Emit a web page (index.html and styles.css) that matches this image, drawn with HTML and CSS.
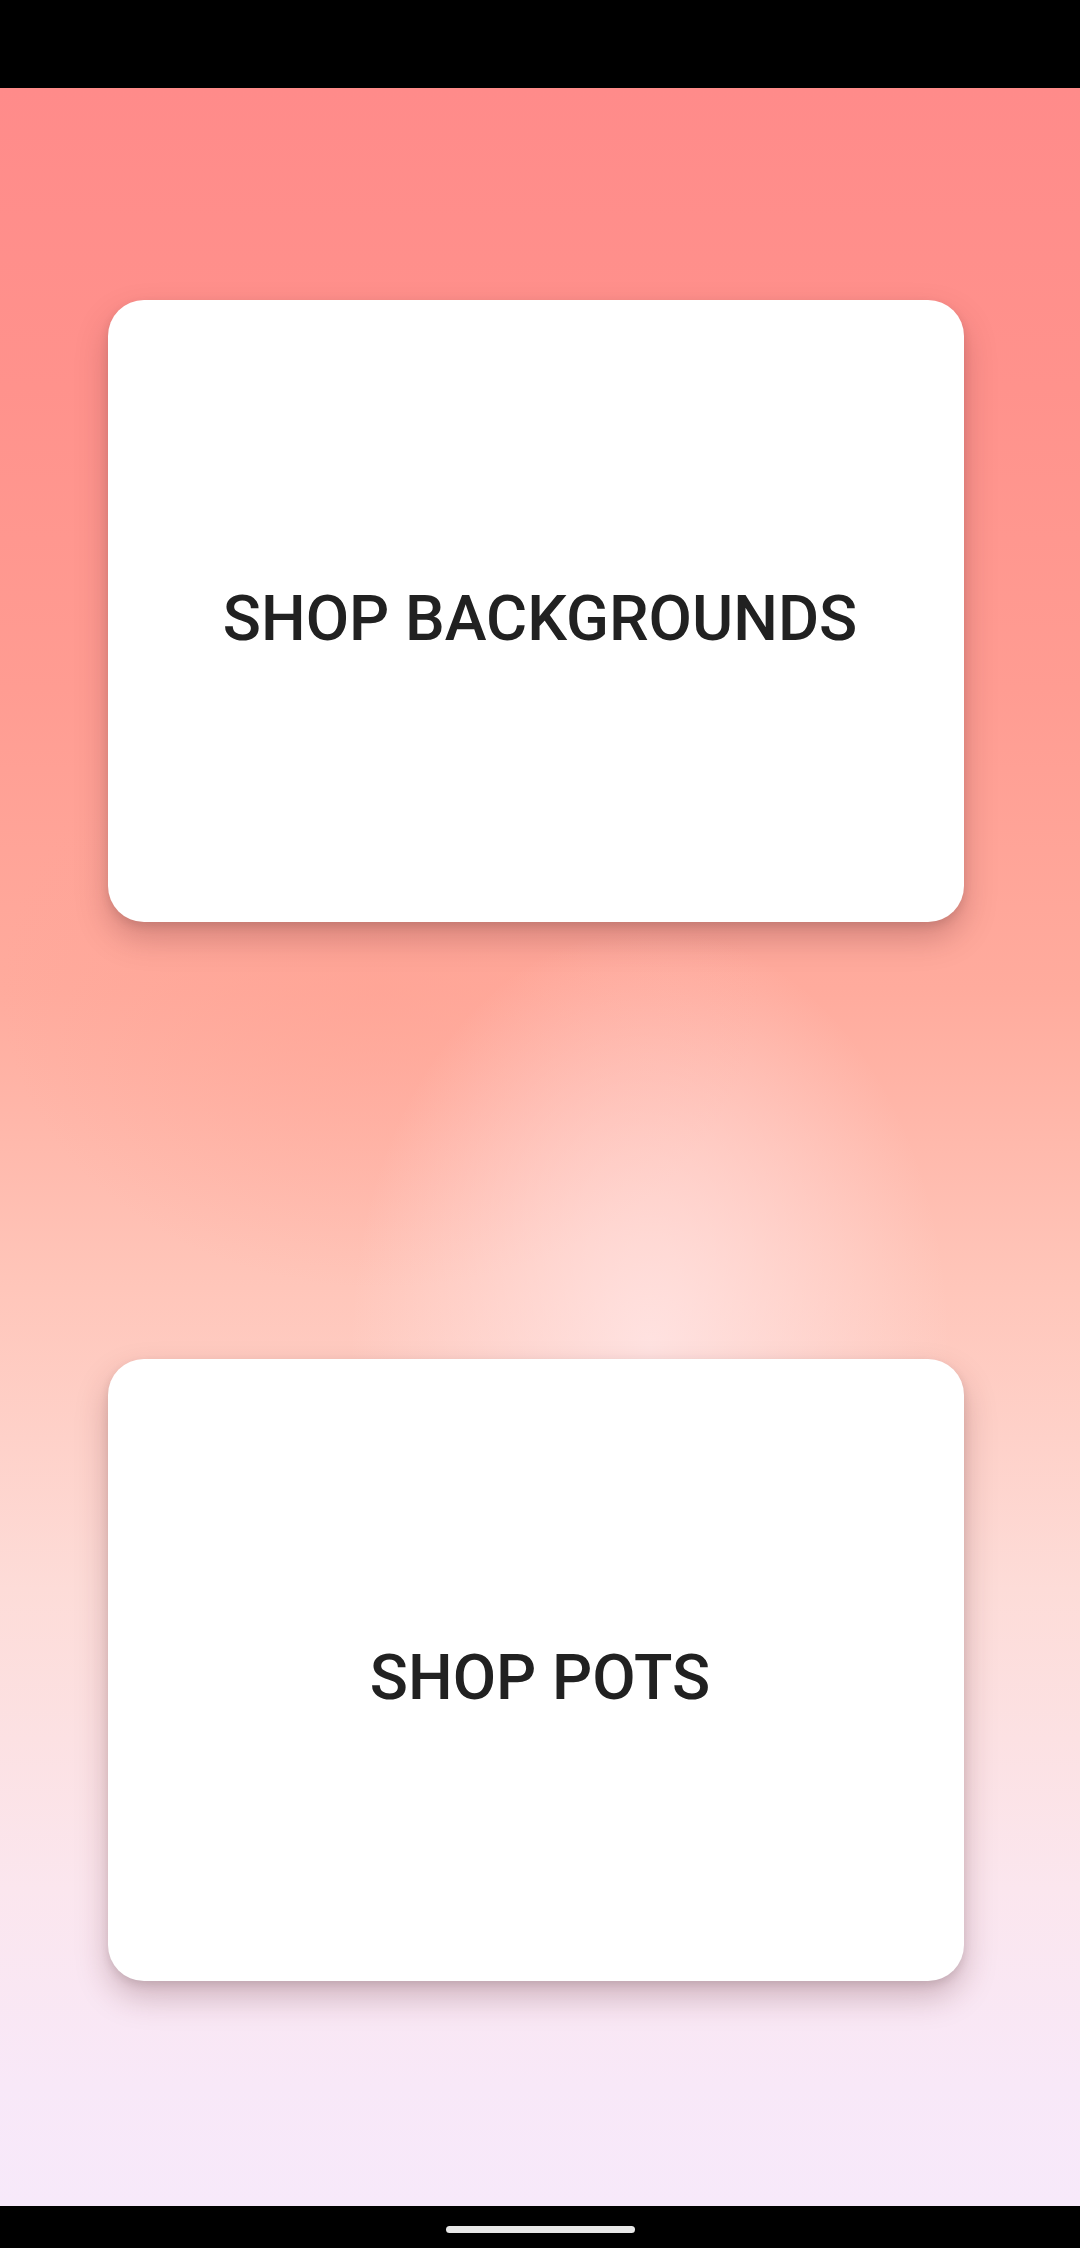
FILE: index.html
```html
<!DOCTYPE html>
<html>
<head>
<meta charset="utf-8">
<link rel="stylesheet" href="styles.css">
</head>
<body>
<div class="screen">
  <div class="status-bar"></div>
  <main class="content">
    <div class="card"><span class="card-label">SHOP BACKGROUNDS</span></div>
    <div class="card"><span class="card-label">SHOP POTS</span></div>
  </main>
  <div class="nav-bar"><div class="home-indicator"></div></div>
</div>
</body>
</html>
```
FILE: styles.css
```css
html, body {
  margin: 0;
  padding: 0;
  background: #000;
}
.screen {
  width: 1080px;
  height: 2248px;
  display: flex;
  flex-direction: column;
  overflow: hidden;
}
.status-bar {
  height: 88px;
  background: #000;
  flex: none;
}
.content {
  flex: 1;
  display: flex;
  flex-direction: column;
  gap: 437px;
  padding: 212px 116px 225px 108px;
  box-sizing: border-box;
  background:
    radial-gradient(ellipse 300px 420px at 650px 1260px, rgba(255, 230, 230, 0.85), rgba(255, 230, 230, 0) 100%),
    radial-gradient(ellipse 380px 300px at 380px 900px, rgba(255, 160, 145, 0.5), rgba(255, 160, 145, 0) 100%),
    linear-gradient(to bottom, #ff8b8a 0px, #ff928c 300px, #ff9c92 600px, #ffab9d 900px, #ffc6ba 1200px, #fddcd8 1500px, #fbe6ee 1800px, #f8e8f8 2000px, #f7e9fa 2118px);
}
.card {
  height: 622px;
  background: #fff;
  border-radius: 36px;
  display: flex;
  align-items: center;
  justify-content: center;
  padding: 16px 0 0 8px;
  box-sizing: border-box;
  box-shadow: 0 16px 32px rgba(90, 30, 40, 0.26), 0 4px 10px rgba(0, 0, 0, 0.10);
}
.card-label {
  font-family: Roboto, "Noto Sans", sans-serif;
  font-weight: 500;
  font-size: 63px;
  color: #212121;
  line-height: 1.17;
}
.nav-bar {
  height: 42px;
  background: #000;
  flex: none;
  display: flex;
  justify-content: center;
  padding-top: 20px;
  box-sizing: border-box;
}
.home-indicator {
  width: 189px;
  height: 7px;
  border-radius: 4px;
  background: #e8e8e8;
}
```
